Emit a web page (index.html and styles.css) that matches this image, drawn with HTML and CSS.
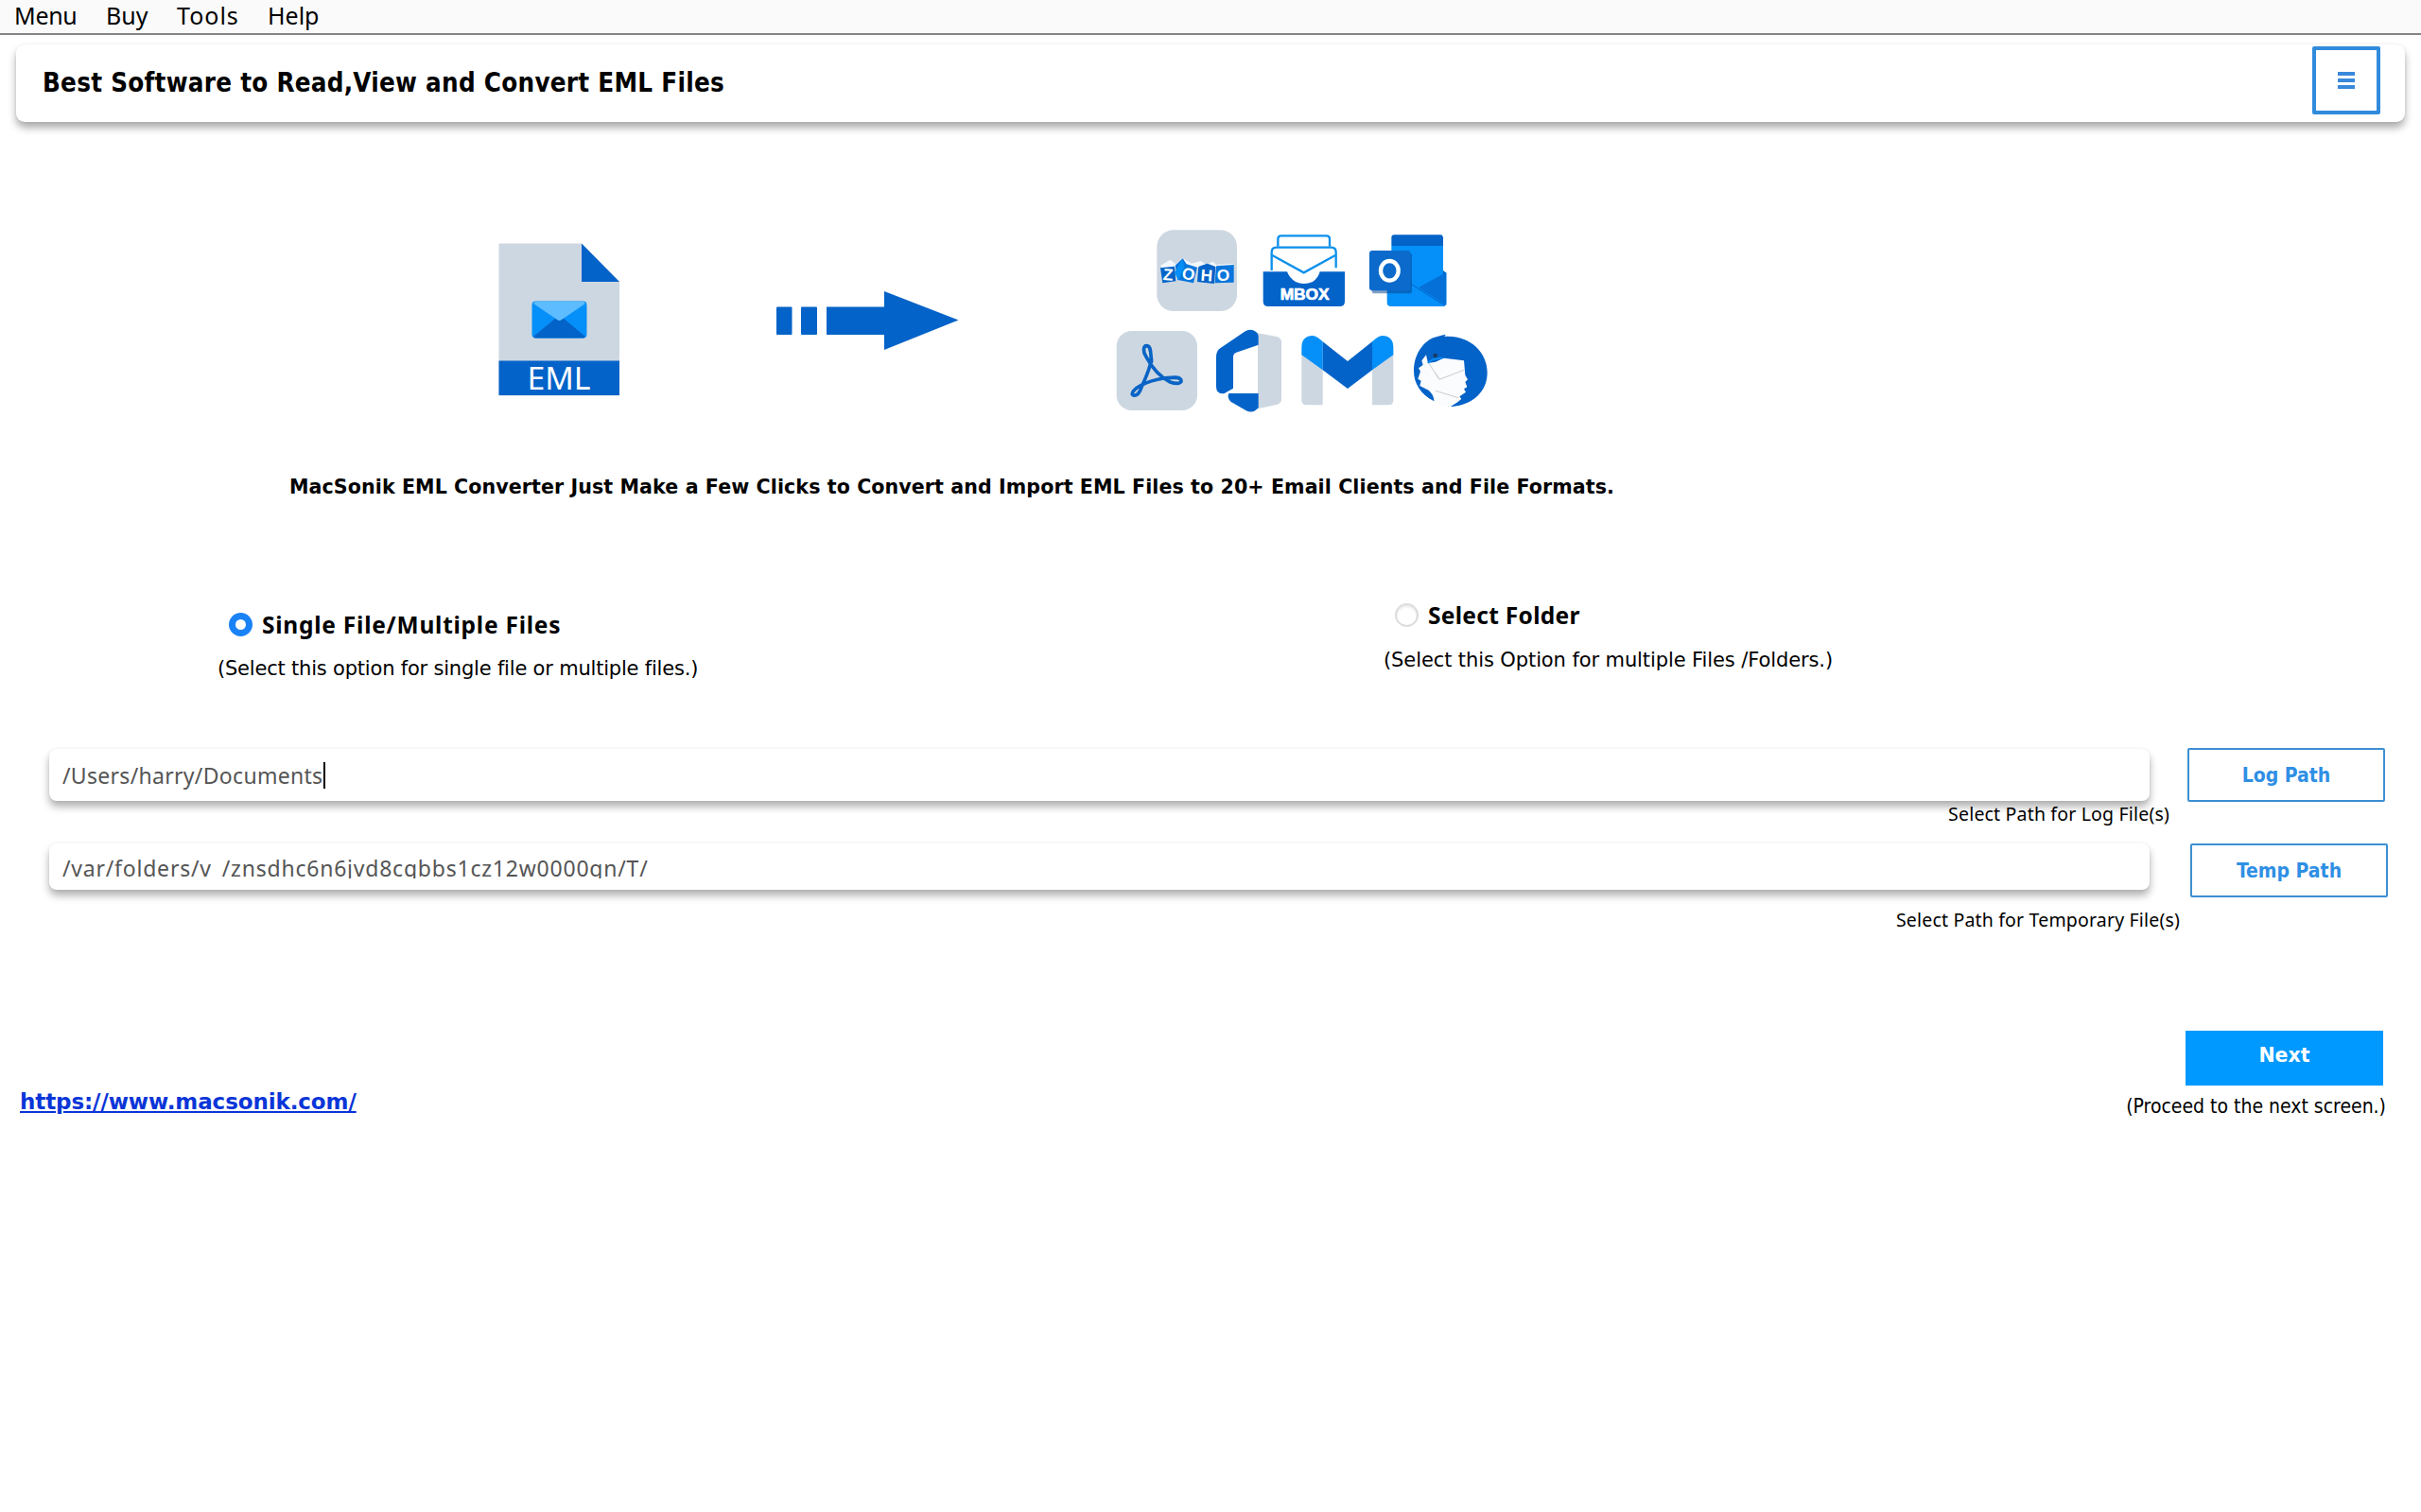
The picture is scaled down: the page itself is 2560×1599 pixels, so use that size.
FILE: index.html
```html
<!DOCTYPE html>
<html lang="en">
<head>
<meta charset="utf-8">
<title>MacSonik EML Converter</title>
<link rel="stylesheet" href="styles.css">
</head>
<body>
<nav class="menubar">
  <span class="menu-item m1">Menu</span><span class="menu-item m2">Buy</span><span class="menu-item m3">Tools</span><span class="menu-item m4">Help</span>
</nav>
<header class="header">
  <h1 class="title">Best Software to Read,View and Convert EML Files</h1>
  <button class="hamburger" aria-label="Options"><i></i><i></i><i></i></button>
</header>
<section class="hero">
  <svg class="eml" width="130" height="164" viewBox="526 256 130 164">
    <path d="M527.5 257.5H615L655 298V418.5H527.5Z" fill="#cdd7e1"/>
    <path d="M615 257.5L655 298H615Z" fill="#0463c8"/>
    <rect x="527.5" y="381.5" width="127.5" height="36.5" fill="#0463c8"/>
    <rect x="562.5" y="318.5" width="58" height="39" rx="4" fill="#0490f8"/>
    <path d="M564 356L588 336H595L619 356Q618 357.500 616 357.500H567Q565 357.500 564 356Z" fill="#0463c8"/>
    <path d="M564 321Q565 318.500 568 318.500H615Q618 318.500 619 321L594 338Q591.500 340 589 338Z" fill="#5dbcff"/>
    <text x="557.500" y="412.300" font-size="33" textLength="67" lengthAdjust="spacingAndGlyphs" class="svg-noto">EML</text>
  </svg>
  <svg class="arrow" width="194" height="64" viewBox="820 307 194 64" fill="#0463c8">
    <rect x="821" y="324.500" width="16.500" height="29.500" rx="1"/><rect x="847" y="324.500" width="17" height="29.500" rx="1"/>
    <path d="M874 324.500H935V308L1013.500 338.500L935 370V354H874Z"/>
  </svg>
  <div class="formats">
    <div class="format-row top">
      <svg class="zoho" width="86" height="87" viewBox="189 69 258 261">
        <rect x="190" y="70" width="254" height="257" rx="52" fill="#cdd7e1"/>
        <path d="M202 182L232 164L250 178L272 160L300 176L330 168L345 180L368 170L378 180L432 176L434 190H205Z" fill="#f3f8fd"/>
        <path d="M201 190L246 185L250 232L208 238Z" fill="#0463c8"/>
        <path d="M248 182L272 160L284 178L318 188L306 238L256 228Z" fill="#0876dc"/>
        <path d="M246 205L272 162L276 188L258 230Z" fill="#0490f8"/>
        <path d="M322 186L350 176L376 186L372 240L318 234Z" fill="#0463c8"/>
        <path d="M378 184L434 180V236L374 238Z" fill="#0876dc"/>
        <g class="svg-bold" font-size="52"><text x="210" y="229" transform="rotate(4 226 210)">Z</text><text x="270" y="227" transform="rotate(8 290 208)">O</text><text x="329" y="232" transform="rotate(4 348 212)">H</text><text x="380" y="232">O</text></g>
      </svg>
      <svg class="mbox" width="88" height="87" viewBox="525 69 264 261">
        <g fill="none" stroke="#0d90ec" stroke-width="7"><path d="M574 122V98Q574 88 584 88H728Q738 88 738 98V122"/><path d="M554 198V140Q554 125 569 125H743Q758 125 758 140V190"/><path d="M556 150L656 205L756 150"/></g>
        <path d="M527 202H603Q610 222 630 234Q656 246 684 234Q702 222 707 202H786V296Q786 312 770 312H543Q527 312 527 296Z" fill="#0463c8"/>
        <text x="581" y="290" font-size="47" textLength="156" lengthAdjust="spacingAndGlyphs" class="svg-bold heavy">MBOX</text>
      </svg>
      <svg class="outlook" width="84" height="87" viewBox="861 69 252 261">
        <path d="M934 120H1098V200L1108 208V300Q1108 312 1096 312H932Q920 312 920 300V180H934Z" fill="#0490f8"/>
        <path d="M934 120V94Q934 85 943 85H1089Q1098 85 1098 94V120Z" fill="#0463c8"/>
        <path d="M1108 204L1020 252L1108 309Z" fill="#0570d8"/><path d="M1098 198L1108 206L1098 210Z" fill="#0463c8"/>
        <path d="M995 240L1104 310" stroke="#0463c8" stroke-width="3"/>
        <rect x="872" y="143" width="127" height="128" rx="8" fill="#03408a" opacity=".5"/>
        <rect x="864" y="135" width="130" height="127" rx="9" fill="#0b6acb"/>
        <ellipse cx="928" cy="199" rx="28" ry="31" fill="none" stroke="#fff" stroke-width="13"/>
      </svg>
    </div>
    <div class="format-row bottom">
      <svg class="pdf" width="87" height="89" viewBox="60 384 261 267">
        <rect x="62" y="390" width="256" height="252" rx="48" fill="#cdd7e1"/>
        <path d="M158 437C146 437 145 456 156 472C166 490 176 498 172 480C170 462 172 438 158 437ZM156 472C172 502 200 536 232 552C254 560 272 556 266 544C258 534 236 538 212 540C186 544 160 552 140 562C120 572 104 590 116 594C128 598 136 584 142 566C156 536 170 506 173 476" fill="none" stroke="#0a64c6" stroke-width="11" stroke-linejoin="round"/>
      </svg>
      <svg class="office" width="71" height="89" viewBox="375 384 213 267">
        <path d="M510 397L570 408Q585 412 585 426V605Q585 618 572 623L510 637Z" fill="#cdd7e1"/>
        <path d="M378 474Q378 452 392 444L468 392Q484 382 500 390Q512 396 512 408V434L442 458Q432 462 432 472V572L404 588Q378 592 378 566Z" fill="#0463c8"/>
        <path d="M418 588H512V634Q494 654 472 642L424 614Q412 604 418 588Z" fill="#0463c8"/>
      </svg>
      <svg class="gmail" width="98" height="89" viewBox="648 384 294 267">
        <path d="M649 460L716 500V625H664Q649 625 649 610ZM940 460L873 500V625H925Q940 625 940 610Z" fill="#cdd7e1"/>
        <path d="M649 440Q651 405 684 405Q698 406 716 424V514L649 466ZM940 440Q938 405 905 405Q891 406 873 424V514L940 466Z" fill="#0490f8"/>
        <path d="M716 424L795 486L873 424V514L795 573L716 514Z" fill="#0463c8"/>
      </svg>
      <svg class="thunderbird" width="80" height="89" viewBox="1002 384 240 267">
        <path d="M1066 412Q1084 406 1106 401L1102 408C1178 402 1238 454 1238 522C1238 584 1190 626 1122 630L1142 616L1130 600L1064 590L1068 612C1026 590 1004 556 1005 514C1006 464 1034 426 1066 412Z" fill="#0463c8"/>
        <path d="M1044 466L1050 492L1074 488L1100 476L1164 484L1168 530L1176 544L1168 552L1174 568L1164 574L1170 584L1150 598L1156 606L1144 616L1116 632L1074 616L1068 596L1046 580L1024 564L1028 548L1018 542L1026 518L1020 508L1034 498L1030 484Z" fill="#fbfcfd"/>
        <path d="M1028 566L1052 578Q1066 590 1070 612Q1040 598 1024 566ZM1122 630Q1160 614 1176 572L1200 580Q1180 626 1122 630Z" fill="#0463c8"/>
        <path d="M1052 492L1086 544L1164 514M1074 580L1146 602M1086 544L1074 524" fill="none" stroke="#c8ccd0" stroke-width="3"/>
        <path d="M1050 492Q1060 478 1096 476" fill="none" stroke="#0490f8" stroke-width="5"/><circle cx="1073" cy="468" r="7" fill="#193c60"/>
      </svg>
    </div>
  </div>
</section>
<p class="tagline">MacSonik EML Converter Just Make a Few Clicks to Convert and Import EML Files to 20+ Email Clients and File Formats.</p>
<section class="options">
  <div class="option single">
    <label class="choice"><span class="radio checked"></span>Single File/Multiple Files</label>
    <p class="note">(Select this option for single file or multiple files.)</p>
  </div>
  <div class="option folder">
    <label class="choice"><span class="radio"></span>Select Folder</label>
    <p class="note">(Select this Option for multiple Files /Folders.)</p>
  </div>
</section>
<section class="path log">
  <div class="field"><span class="value">/Users/harry/Documents</span><span class="caret"></span></div>
  <button class="browse">Log Path</button>
  <p class="hint">Select Path for Log File(s)</p>
</section>
<section class="path temp">
  <div class="field"><span class="value">/var/folders/v_/znsdhc6n6jvd8cqbbs1cz12w0000gn/T/</span></div>
  <button class="browse">Temp Path</button>
  <p class="hint">Select Path for Temporary File(s)</p>
</section>
<footer class="footer">
  <a class="site">https://www.macsonik.com/</a>
  <div class="proceed">
    <button class="next">Next</button>
    <p class="note">(Proceed to the next screen.)</p>
  </div>
</footer>
</body>
</html>
```
FILE: styles.css
```css
* { box-sizing: border-box; margin: 0; padding: 0; }
body { background: #fff; color: #000; font-family: "DejaVu Sans Condensed", "DejaVu Sans", sans-serif; }
button { background: #fff; font-family: inherit; }
svg { display: block; flex: none; }

.menubar { height: 37px; background: #fafafa; border-bottom: 2px solid #858585; display: flex; padding-left: 15px; font: 25px/33px "Noto Sans", sans-serif; }
.menu-item { flex: none; }
.m1 { width: 97px; letter-spacing: -.3px; }
.m2 { width: 75px; }
.m3 { width: 96px; letter-spacing: 1px; }

.header { height: 82px; margin: 10px 17px 0; border-radius: 9px; background: #fff; box-shadow: 0 6px 9px rgba(0,0,0,.33), 0 0 3px rgba(0,0,0,.06); display: flex; justify-content: space-between; padding: 2px 26px 0 28px; }
.title { font-size: 27.5px; line-height: 34px; padding-top: 21px; letter-spacing: .27px; white-space: nowrap; }
.hamburger { width: 72px; height: 72px; border: 4px solid #318bdc; border-radius: 2px; display: flex; flex-direction: column; align-items: center; justify-content: center; gap: 3px; }
.hamburger i { width: 18px; height: 4px; background: #3989db; }

.hero { display: flex; margin-top: 114px; height: 194px; padding-left: 526px; }
.eml { margin-top: 13px; }
.arrow { margin: 64px 0 0 164px; }
.formats { margin-left: 166px; }
.format-row { display: flex; }
.top { height: 105px; padding-left: 43px; }
.mbox { margin-left: 26px; }
.outlook { margin-left: 24px; }
.office { margin-left: 18px; }
.gmail, .thunderbird { margin-left: 20px; }
.svg-noto { font-family: "Noto Sans", sans-serif; fill: #fff; }
.svg-bold { font-family: "Liberation Sans", sans-serif; font-weight: bold; fill: #fff; }
.heavy { stroke: #fff; stroke-width: 2; }

.tagline { margin: 63px 0 0 306px; font: bold 20.6px/30px "DejaVu Sans", sans-serif; letter-spacing: .083px; white-space: nowrap; }

.options { display: grid; grid-template-columns: 1233px 1fr; margin: 106px 0 0 230px; height: 86px; }
.single { padding-top: 10px; }
.choice { display: flex; align-items: center; height: 30px; padding-left: 12px; font: bold 24.5px/30px "Noto Sans", sans-serif; letter-spacing: .3px; }
.single .choice { letter-spacing: .76px; }
.radio { position: relative; top: -1px; width: 25px; height: 25px; border-radius: 50%; border: 2px solid #dcdcdc; margin-right: 10px; box-shadow: inset 0 2px 2px rgba(0,0,0,.08); }
.radio.checked { border: 7px solid #1a82f7; box-shadow: none; }
.note { font-size: 21px; line-height: 30px; white-space: nowrap; }
.option .note { font-family: "DejaVu Sans", sans-serif; margin-top: 16px; letter-spacing: -.2px; }
.folder .note { margin-top: 17px; letter-spacing: -.1px; }

.path { display: grid; grid-template-columns: 2221px 209px; column-gap: 40px; align-items: start; padding-left: 52px; grid-template-rows: 58px auto; }
.log { margin-top: 69px; height: 101px; }
.temp { height: 93px; column-gap: 43px; grid-template-rows: 69px auto; }
.field { display: flex; align-items: center; height: 55px; margin-top: 1px; border-radius: 8px; background: #fff; box-shadow: 0 6px 8px rgba(0,0,0,.31), 0 0 3px rgba(0,0,0,.06); padding-left: 14px; font: 23px/30px "Noto Sans", sans-serif; letter-spacing: .3px; color: #555; }
.temp .field { height: 49px; margin-top: 0; align-items: flex-start; padding-top: 11px; letter-spacing: .78px; }
.value { height: 30px; }
.temp .value { height: 26px; overflow: hidden; }
.caret { width: 2px; height: 28px; background: #000; margin-left: 1px; }
.browse { height: 57px; border: 2px solid #3d8fd2; border-radius: 2px; color: #2f8fe4; font-size: 21px; line-height: 30px; font-weight: bold; }
.hint { position: relative; font: 19.5px/24px "Noto Sans", sans-serif; letter-spacing: .18px; grid-column: 1 / -1; justify-self: end; margin-right: 228px; }
.temp .hint { margin-right: 220px; }

.footer { display: flex; justify-content: space-between; margin-top: 105px; padding: 0 40px 0 21px; }
.site { margin-top: 60px; color: #0a35d8; font: bold 23px/30px "DejaVu Sans", sans-serif; letter-spacing: -.1px; text-decoration: underline; }
.proceed { display: flex; flex-direction: column; align-items: flex-end; }
.next { width: 209px; height: 58px; border: 0; background: #0099ff; color: #fff; font: bold 20.5px/30px "DejaVu Sans", sans-serif; padding-bottom: 6px; }
.proceed .note { margin: 7px -3px 0 0; }
```
